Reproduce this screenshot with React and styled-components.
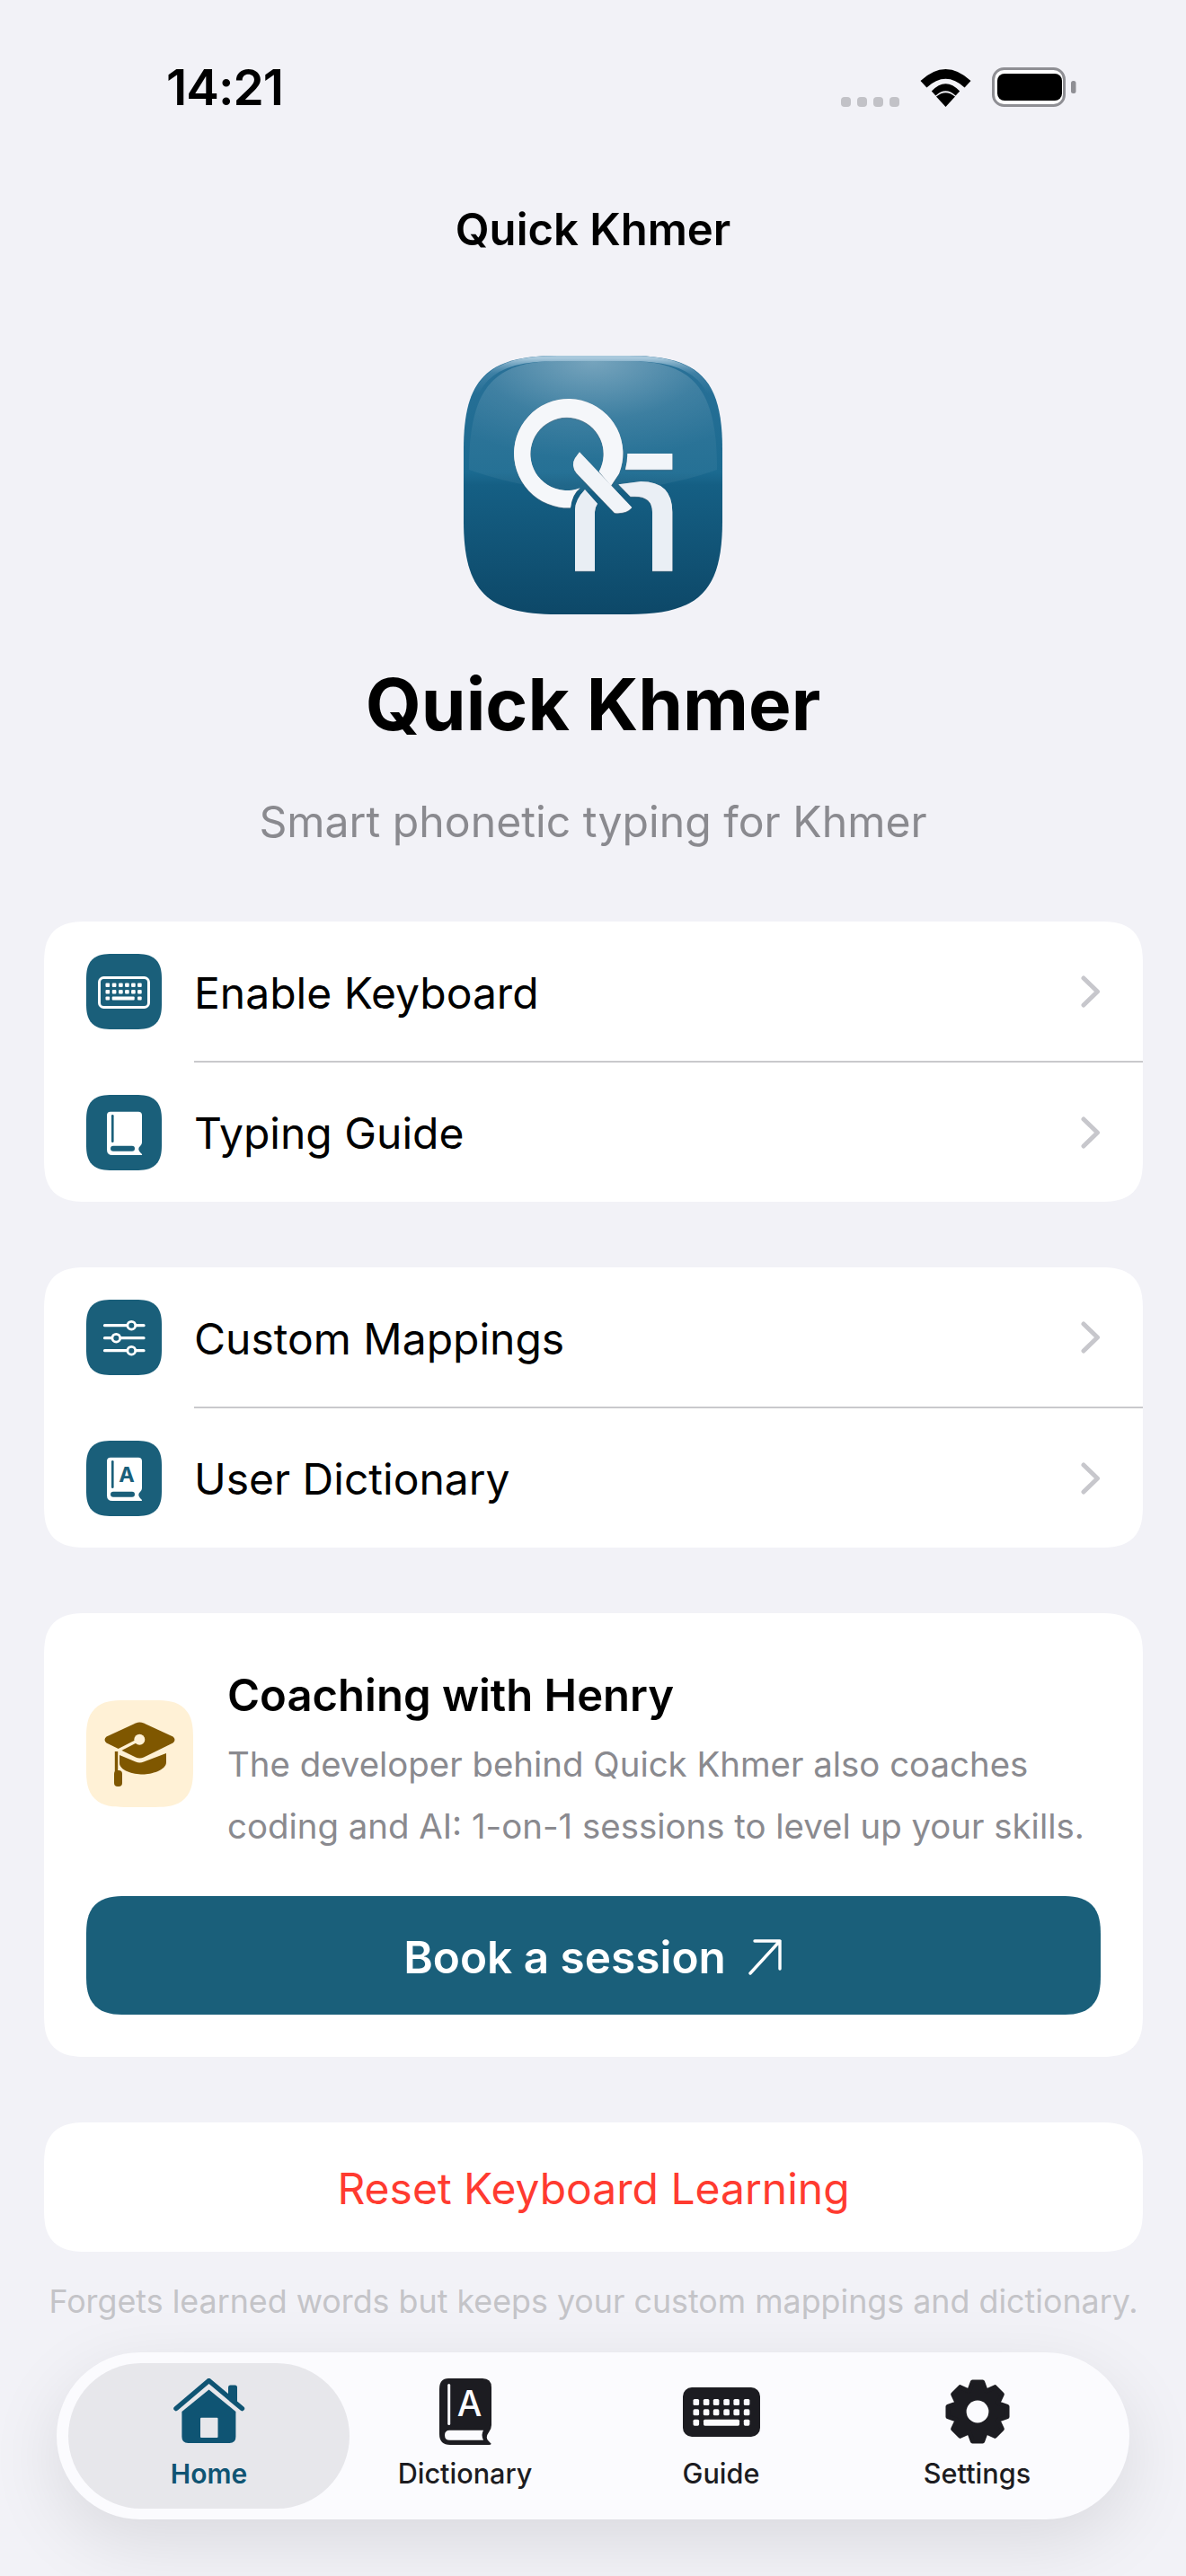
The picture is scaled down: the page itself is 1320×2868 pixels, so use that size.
import React from "react";
import styled, { createGlobalStyle, css } from "styled-components";

const Global = createGlobalStyle`
  html, body { margin: 0; padding: 0; background: #f2f2f7; }
  * { box-sizing: border-box; }
`;

const TEAL = "#1a5f7a";
const INK = "#1c1c21";

const squircle = css`
  corner-shape: superellipse(1.45);
`;

const Page = styled.div`
  position: relative;
  width: 1320px;
  height: 2868px;
  overflow: hidden;
  background: #f2f2f7;
  color: #000;
  font-family: Inter, "Liberation Sans", sans-serif;
`;

const StatusBar = styled.div`
  height: 194px;
  padding: 0 122px 0 185px;
  display: flex;
  align-items: center;
  justify-content: space-between;
`;
const Clock = styled.span`
  font-size: 55px;
  font-weight: 600;
  letter-spacing: -1px;
  line-height: 1;
`;
const StatusIcons = styled.div`
  display: flex;
  align-items: flex-end;
  gap: 23px;
`;
const SignalDots = styled.div`
  display: flex;
  gap: 7px;
`;
const SignalDot = styled.i`
  display: block;
  width: 11px;
  height: 11px;
  border-radius: 4px;
  background: #c2c2c7;
`;
const NavTitle = styled.div`
  height: 122px;
  display: flex;
  align-items: center;
  justify-content: center;
  font-size: 49px;
  font-weight: 600;
`;
const Hero = styled.header`
  display: flex;
  flex-direction: column;
  align-items: center;
  padding-top: 80px;
`;
const AppTitle = styled.h1`
  margin: 50px 0 0;
  font-size: 80px;
  line-height: 100px;
  font-weight: 700;
`;
const Subtitle = styled.p`
  margin: 51px 0 0;
  font-size: 48.2px;
  line-height: 60px;
  color: #8a8a8f;
`;
const Main = styled.main`
  padding: 81px 48px 0 49px;
  display: flex;
  flex-direction: column;
  gap: 73px;
`;
const Card = styled.section`
  background: #fff;
  border-radius: 48px;
  ${squircle}
  overflow: hidden;
`;
const Row = styled.div`
  height: ${(p) => (p.$divided ? 157 : 155)}px;
  padding-left: 47px;
  padding-right: 47px;
  display: flex;
  align-items: center;
  gap: 36px;
  position: relative;
  padding-bottom: ${(p) => (p.$divided ? 1 : 0)}px;
  &::after {
    content: "";
    display: ${(p) => (p.$divided ? "block" : "none")};
    position: absolute;
    left: 167px;
    right: 0;
    bottom: 0;
    height: 2px;
    background: #c9c9cc;
  }
`;
const RowIcon = styled.div`
  width: 84px;
  height: 84px;
  flex: none;
  border-radius: 29px;
  ${squircle}
  background: ${TEAL};
  svg { display: block; }
`;
const RowLabel = styled.span`
  flex: 1;
  padding-top: 3px;
  font-size: 48px;
  line-height: 60px;
`;
const CoachCard = styled(Card)`
  padding: 47px 47px 47px 47px;
`;
const CoachHead = styled.div`
  display: flex;
  align-items: center;
  gap: 38px;
`;
const CoachIcon = styled.div`
  width: 119px;
  height: 119px;
  flex: none;
  margin-top: -6px;
  border-radius: 42px;
  ${squircle}
  background: #fff1d6;
  svg { display: block; }
`;
const CoachTitle = styled.h2`
  margin: 0;
  padding-top: 2px;
  font-size: 49px;
  line-height: 85px;
  font-weight: 600;
`;
const CoachBody = styled.p`
  margin: 0;
  font-size: 38.4px;
  line-height: 69px;
  color: #8a8a8f;
  white-space: nowrap;
`;
const BookButton = styled.div`
  margin-top: 43px;
  height: 132px;
  padding-top: 3px;
  border-radius: 44px;
  ${squircle}
  background: ${TEAL};
  color: #fff;
  font-size: 49.5px;
  font-weight: 600;
  display: flex;
  align-items: center;
  justify-content: center;
  gap: 24px;
`;
const ResetCard = styled(Card)`
  height: 144px;
  padding-top: 3px;
  display: flex;
  align-items: center;
  justify-content: center;
  color: #ff3b30;
  font-size: 48px;
`;
const Note = styled.p`
  margin: -40px 0 0;
  text-align: center;
  font-size: 35.8px;
  line-height: 44px;
  white-space: nowrap;
  color: #c4c4c8;
`;
const TabBar = styled.nav`
  position: absolute;
  left: 63px;
  right: 63px;
  bottom: 63px;
  height: 186px;
  padding: 12px 27px;
  border-radius: 93px;
  background: #fbfbfe;
  box-shadow: 0 24px 80px rgba(0, 0, 0, 0.1);
  display: grid;
  grid-template-columns: repeat(4, 1fr);
`;
const Tab = styled.div`
  margin: ${(p) => (p.$active ? "0 -14px" : "0")};
  border-radius: 81px;
  background: ${(p) => (p.$active ? "#e7e7eb" : "transparent")};
  color: ${(p) => (p.$active ? "#0f5473" : INK)};
  display: flex;
  flex-direction: column;
  align-items: center;
`;
const TabIconSlot = styled.div`
  height: 84px;
  margin-top: 12px;
  display: flex;
  align-items: center;
  justify-content: center;
  svg { display: block; }
`;
const TabLabel = styled.span`
  margin-top: 9px;
  font-size: ${(p) => (p.$active ? 30 : 30.6)}px;
  line-height: 36px;
  font-weight: ${(p) => (p.$active ? 600 : 500)};
`;
const LogoSvg = styled.svg`
  display: block;
  width: 288px;
  height: 288px;
`;
const LogoMark = styled.g`
  filter: drop-shadow(0 1px 0 #a7b0bb) drop-shadow(0 1px 1px rgba(0, 0, 0, 0.25));
`;

const Wifi = () => (
  <svg width="57" height="42" viewBox="0 0 57 42">
    <path d="M28.5 42 18 30.5Q28.5 22 39 30.5Z" />
    <path d="M12.8 24.5Q28.5 8 44.2 24.5L39.6 29.6Q28.5 19 17.4 29.6Z" />
    <path d="M.5 13Q28.5-13 56.5 13L49.6 20.4Q28.5 1 7.4 20.4Z" />
  </svg>
);
const Battery = () => (
  <svg width="94" height="44" viewBox="0 0 94 44">
    <rect x="1.5" y="1.5" width="79" height="41" rx="12" fill="#fff" stroke="#8f8f94" strokeWidth="3" />
    <rect x="6" y="7" width="72" height="30" rx="8" fill="#000" />
    <rect x="88" y="15" width="5.5" height="14" rx="2.5" fill="#8f8f94" />
  </svg>
);
const Logo = () => {
  const shape = "M0 104C0 26 26 0 104 0H184C262 0 288 26 288 104V184C288 262 262 288 184 288H104C26 288 0 262 0 184Z";
  return (
    <LogoSvg viewBox="0 0 288 288">
      <defs>
        <linearGradient id="lgBg" x1="0" y1="0" x2="0" y2="1">
          <stop offset="0" stopColor="#2a7198" />
          <stop offset=".45" stopColor="#1b6a90" />
          <stop offset=".5" stopColor="#155f84" />
          <stop offset="1" stopColor="#0d4868" />
        </linearGradient>
        <radialGradient id="lgShine" cx=".5" cy="0" r=".75">
          <stop offset="0" stopColor="#fff" stopOpacity=".36" />
          <stop offset=".6" stopColor="#fff" stopOpacity=".12" />
          <stop offset="1" stopColor="#fff" stopOpacity=".05" />
        </radialGradient>
        <linearGradient id="lgRim" x1="0" y1="0" x2="0" y2="1">
          <stop offset="0" stopColor="#a9c9dc" />
          <stop offset=".06" stopColor="#5f97b8" stopOpacity=".4" />
          <stop offset=".14" stopColor="#5f97b8" stopOpacity="0" />
        </linearGradient>
        <linearGradient id="lgMark" x1="0" y1="0" x2="0" y2="1">
          <stop offset="0" stopColor="#ffffff" />
          <stop offset="1" stopColor="#e1e7ef" />
        </linearGradient>
      </defs>
      <path d={shape} fill="url(#lgBg)" />
      <path d="M6 127C6 40 30 6 104 6H184C258 6 282 40 282 127Q144 175 6 127Z" fill="url(#lgShine)" />
      <path d={shape} fill="none" stroke="url(#lgRim)" strokeWidth="6" transform="translate(3 3) scale(.979)" />
      <LogoMark transform="translate(-36 -26) scale(.33333)">
        <path fill="#f5f7fa" d="M465 586A182 182 0 1 1 627 472L600 512 560 465A122 122 0 1 0 497 520Q470 540 465 586Z" />
        <path fill="#f1f4f8" d="M495 400 670 585Q650 607 612 603L485 470Q465 445 480 420Z" />
        <path fill="#f2f5f9" d="M655 405H805V458H648Q655 430 655 405Z" />
        <path fill="#e9eef4" d="M480 797V592Q480 560 513 525L555 572Q546 585 546 600V797Z" />
        <path fill="#eaeff5" d="M625 508 700 498Q805 498 805 600V797H738V600Q738 548 680 548H665Z" />
      </LogoMark>
    </LogoSvg>
  );
};

const BookShape = ({ fill = "#fff" }) => (
  <path fill={fill} d="M27 18.7H58Q62 18.7 62 22.7V53Q62 55 60 57Q56.5 60 60 64L62 66Q62.5 67 61 67H29Q23 67 23 61V22.7Q23 18.7 27 18.7Z" />
);
const KeyboardGlyph = () => (
  <svg width="84" height="84" viewBox="0 0 84 84">
    <rect x="14.5" y="26.5" width="55" height="33" rx="5" fill="none" stroke="#fff" strokeWidth="3" />
    {[0, 1].map((r) =>
      [21.5, 28.8, 36.1, 43.1, 50.1, 57.1].map((x) => (
        <rect key={`${r}${x}`} x={x} y={32.5 + r * 7.4} width="4.6" height="4.6" rx="1" fill="#fff" />
      ))
    )}
    <rect x="21.5" y="47.4" width="4.6" height="4.2" rx="1" fill="#fff" />
    <rect x="28.7" y="47.6" width="25" height="3.8" rx="1" fill="#fff" />
    <rect x="57.1" y="47.4" width="4.6" height="4.2" rx="1" fill="#fff" />
  </svg>
);
const BookGlyph = () => (
  <svg width="84" height="84" viewBox="0 0 84 84">
    <BookShape />
    <rect x="28" y="22" width="2.6" height="31" rx="1.3" fill={TEAL} />
    <rect x="27" y="56.7" width="27" height="6" rx="3" fill={TEAL} />
  </svg>
);
const SlidersGlyph = () => (
  <svg width="84" height="84" viewBox="0 0 84 84">
    {[[28.7, 50.3], [42.7, 33.3], [56.7, 50.3]].map(([y, k]) => (
      <g key={y}>
        <line x1="20.5" x2="64" y1={y} y2={y} stroke="#fff" strokeWidth="3.2" strokeLinecap="round" />
        <circle cx={k} cy={y} r="4.4" fill={TEAL} stroke="#fff" strokeWidth="2.8" />
      </g>
    ))}
  </svg>
);
const DictGlyph = () => (
  <svg width="84" height="84" viewBox="0 0 84 84">
    <BookShape />
    <rect x="28" y="22" width="2.6" height="31" rx="1.3" fill={TEAL} />
    <rect x="27" y="56.7" width="27" height="6" rx="3" fill={TEAL} />
    <text x="45" y="45.5" textAnchor="middle" fontFamily="Inter, sans-serif" fontWeight="700" fontSize="23.5" fill={TEAL}>A</text>
  </svg>
);
const CapGlyph = () => (
  <svg width="119" height="119" viewBox="0 0 119 119">
    <path fill="#7f5700" d="M55 25.4Q59.4 23.4 64 25.4L96.5 40.5Q100.5 44 96.5 47.5L64 63.5Q59.4 65.5 55 63.5L22.5 47.5Q18.5 44 22.5 40.5Z" />
    <path fill="#7f5700" d="M37 61 55 68.5Q59.5 70.5 64 68.5L89 59V69C89 78 72 82.5 63 82.5C52 82.5 37 78 37 70Z" />
    <line x1="59.3" y1="43.7" x2="33.5" y2="57" stroke="#fff1d6" strokeWidth="3.4" />
    <circle cx="59.3" cy="43.7" r="6" fill="#fff1d6" />
    <line x1="33.5" y1="57" x2="33.5" y2="80" stroke="#7f5700" strokeWidth="3.4" />
    <rect x="31" y="78" width="9" height="18" rx="4" fill="#7f5700" />
  </svg>
);
const Chevron = () => (
  <svg width="22" height="36" viewBox="0 0 22 36">
    <path d="M3 3 18.5 18 3 33" fill="none" stroke="#c7c7cc" strokeWidth="5" strokeLinecap="round" strokeLinejoin="round" />
  </svg>
);
const ArrowOut = () => (
  <svg width="40" height="40" viewBox="0 0 40 40">
    <path d="M8 2H36V33M36 2 3 38" fill="none" stroke="#fff" strokeWidth="3.4" strokeLinecap="round" strokeLinejoin="round" />
  </svg>
);
const HouseTab = () => (
  <svg width="81" height="74" viewBox="0 0 81 74">
    <path fill="#0f5473" d="M62 21V10Q62 7.5 64.5 7.5H69.5Q72 7.5 72 10V30Z" />
    <path d="M4 33.5 40.5 2.5 77.4 33.5" fill="none" stroke="#0f5473" strokeWidth="5.5" strokeLinecap="round" strokeLinejoin="round" />
    <path fill="#0f5473" d="M40.5 12.5 70.4 37V65Q70.4 72 63.4 72H17.4Q10.4 72 10.4 65V37Z" />
    <rect x="31" y="43.7" width="19.5" height="22.3" rx="1" fill="#e7e7eb" />
  </svg>
);
const DictTab = () => (
  <svg width="58" height="74" viewBox="0 0 58 74">
    <path fill={INK} d="M10 0H48Q58 0 58 10V52Q58 56 55 60Q50.5 66 55 70L57.5 72.5Q58 74 55 74H12Q0 74 0 62V12Q0 0 10 0Z" />
    <rect x="9.2" y="6" width="3" height="46" rx="1.5" fill="#fbfbfe" />
    <path fill="#fbfbfe" d="M11.5 57.7H49Q46 63 49 68.7H11.5Q6 68.7 6 63.2T11.5 57.7Z" />
    <text x="33.5" y="42" textAnchor="middle" fontFamily="Inter, sans-serif" fontWeight="500" fontSize="39" fill="#fbfbfe">A</text>
  </svg>
);
const KeyboardTab = () => (
  <svg width="86" height="55" viewBox="0 0 86 55">
    <rect width="86" height="55" rx="10" fill={INK} />
    {[13, 24.3].map((y) =>
      [11.5, 22.8, 33.8, 45.3, 56.4, 67.8].map((x) => (
        <rect key={`${y}${x}`} x={x} y={y} width="6.6" height="7" rx="1.6" fill="#fbfbfe" />
      ))
    )}
    <rect x="11.5" y="35.7" width="6.6" height="7" rx="1.6" fill="#fbfbfe" />
    <rect x="23" y="35.7" width="40" height="7" rx="1.6" fill="#fbfbfe" />
    <rect x="67.8" y="35.7" width="6.6" height="7" rx="1.6" fill="#fbfbfe" />
  </svg>
);
const gearPath = () => {
  const c = 37;
  const pt = (r, a) => `${(c + r * Math.sin(a)).toFixed(2)} ${(c - r * Math.cos(a)).toFixed(2)}`;
  let d = "";
  for (let i = 0; i < 8; i++) {
    const a = (i * Math.PI) / 4;
    const step = d ? "L" : "M";
    d += `${step}${pt(25.5, a - 0.36)}L${pt(33.5, a - 0.17)}L${pt(33.5, a + 0.17)}L${pt(25.5, a + 0.36)}`;
  }
  return `${d}Z`;
};
const GearTab = () => (
  <svg width="74" height="74" viewBox="0 0 74 74">
    <path d={gearPath()} fill={INK} stroke={INK} strokeWidth="5" strokeLinejoin="round" />
    <circle cx="37" cy="37" r="12.4" fill="#fbfbfe" />
  </svg>
);

const groups = [
  [
    { label: "Enable Keyboard", Icon: KeyboardGlyph },
    { label: "Typing Guide", Icon: BookGlyph },
  ],
  [
    { label: "Custom Mappings", Icon: SlidersGlyph },
    { label: "User Dictionary", Icon: DictGlyph },
  ],
];
const tabs = [
  { label: "Home", Icon: HouseTab, active: true },
  { label: "Dictionary", Icon: DictTab },
  { label: "Guide", Icon: KeyboardTab },
  { label: "Settings", Icon: GearTab },
];

export default function App() {
  return (
    <Page>
      <Global />
      <StatusBar>
        <Clock>14:21</Clock>
        <StatusIcons>
          <SignalDots>
            {[0, 1, 2, 3].map((i) => <SignalDot key={i} />)}
          </SignalDots>
          <Wifi />
          <Battery />
        </StatusIcons>
      </StatusBar>
      <NavTitle>Quick Khmer</NavTitle>
      <Hero>
        <Logo />
        <AppTitle>Quick Khmer</AppTitle>
        <Subtitle>Smart phonetic typing for Khmer</Subtitle>
      </Hero>
      <Main>
        {groups.map((rows) => (
          <Card key={rows[0].label}>
            {rows.map(({ label, Icon }, i) => (
              <Row key={label} $divided={i === 0}>
                <RowIcon><Icon /></RowIcon>
                <RowLabel>{label}</RowLabel>
                <Chevron />
              </Row>
            ))}
          </Card>
        ))}
        <CoachCard>
          <CoachHead>
            <CoachIcon><CapGlyph /></CoachIcon>
            <div>
              <CoachTitle>Coaching with Henry</CoachTitle>
              <CoachBody>
                The developer behind Quick Khmer also coaches<br />
                coding and AI: 1-on-1 sessions to level up your skills.
              </CoachBody>
            </div>
          </CoachHead>
          <BookButton>Book a session <ArrowOut /></BookButton>
        </CoachCard>
        <ResetCard>Reset Keyboard Learning</ResetCard>
        <Note>Forgets learned words but keeps your custom mappings and dictionary.</Note>
      </Main>
      <TabBar>
        {tabs.map(({ label, Icon, active }) => (
          <Tab key={label} $active={active}>
            <TabIconSlot><Icon /></TabIconSlot>
            <TabLabel $active={active}>{label}</TabLabel>
          </Tab>
        ))}
      </TabBar>
    </Page>
  );
}
